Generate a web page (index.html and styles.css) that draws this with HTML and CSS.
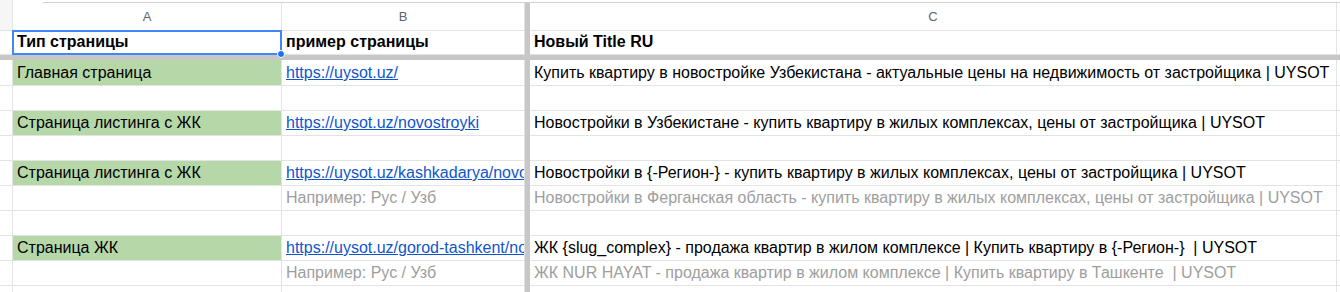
FILE: index.html
```html
<!DOCTYPE html>
<html lang="ru">
<head>
<meta charset="utf-8">
<title>Sheet</title>
<link rel="stylesheet" href="styles.css">
</head>
<body>
<div class="sheet">
  <div class="row top"><div class="corner-top"></div><div class="gap-top"></div><div class="topline"></div></div>
  <div class="row letters">
    <div class="cell rh corner"></div>
    <div class="cell">A</div>
    <div class="cell">B</div>
    <div class="bar"></div>
    <div class="cell">C</div>
    <div class="cell rest"></div>
  </div>
  <div class="row head">
    <div class="cell rh"></div>
    <div class="cell a selected">Тип страницы<span class="handle"></span></div>
    <div class="cell">пример страницы</div>
    <div class="bar"></div>
    <div class="cell">Новый Title RU</div>
    <div class="cell rest"></div>
  </div>
  <div class="hbar"></div>
  <div class="row first">
    <div class="cell rh"></div>
    <div class="cell a green">Главная страница</div>
    <div class="cell"><a class="link">https://uysot.uz/</a></div>
    <div class="bar"></div>
    <div class="cell">Купить квартиру в новостройке Узбекистана - актуальные цены на недвижимость от застройщика | UYSOT</div>
    <div class="cell rest"></div>
  </div>
  <div class="row">
    <div class="cell rh"></div>
    <div class="cell a"></div>
    <div class="cell"></div>
    <div class="bar"></div>
    <div class="cell"></div>
    <div class="cell rest"></div>
  </div>
  <div class="row">
    <div class="cell rh"></div>
    <div class="cell a green">Страница листинга с ЖК</div>
    <div class="cell"><a class="link">https://uysot.uz/novostroyki</a></div>
    <div class="bar"></div>
    <div class="cell">Новостройки в Узбекистане - купить квартиру в жилых комплексах, цены от застройщика | UYSOT</div>
    <div class="cell rest"></div>
  </div>
  <div class="row">
    <div class="cell rh"></div>
    <div class="cell a"></div>
    <div class="cell"></div>
    <div class="bar"></div>
    <div class="cell"></div>
    <div class="cell rest"></div>
  </div>
  <div class="row">
    <div class="cell rh"></div>
    <div class="cell a green">Страница листинга с ЖК</div>
    <div class="cell"><a class="link">https://uysot.uz/kashkadarya/novo</a></div>
    <div class="bar"></div>
    <div class="cell">Новостройки в {-Регион-} - купить квартиру в жилых комплексах, цены от застройщика | UYSOT</div>
    <div class="cell rest"></div>
  </div>
  <div class="row">
    <div class="cell rh"></div>
    <div class="cell a"></div>
    <div class="cell muted">Например: Рус / Узб</div>
    <div class="bar"></div>
    <div class="cell muted">Новостройки в Ферганская область - купить квартиру в жилых комплексах, цены от застройщика | UYSOT</div>
    <div class="cell rest"></div>
  </div>
  <div class="row">
    <div class="cell rh"></div>
    <div class="cell a"></div>
    <div class="cell"></div>
    <div class="bar"></div>
    <div class="cell"></div>
    <div class="cell rest"></div>
  </div>
  <div class="row">
    <div class="cell rh"></div>
    <div class="cell a green">Страница ЖК</div>
    <div class="cell"><a class="link">https://uysot.uz/gorod-tashkent/no</a></div>
    <div class="bar"></div>
    <div class="cell">ЖК {slug_complex} - продажа квартир в жилом комплексе | Купить квартиру в {-Регион-}&nbsp; | UYSOT</div>
    <div class="cell rest"></div>
  </div>
  <div class="row">
    <div class="cell rh"></div>
    <div class="cell a"></div>
    <div class="cell muted">Например: Рус / Узб</div>
    <div class="bar"></div>
    <div class="cell muted">ЖК NUR HAYAT - продажа квартир в жилом комплексе | Купить квартиру в Ташкенте&nbsp; | UYSOT</div>
    <div class="cell rest"></div>
  </div>
  <div class="row">
    <div class="cell rh"></div>
    <div class="cell a"></div>
    <div class="cell"></div>
    <div class="bar"></div>
    <div class="cell"></div>
    <div class="cell rest"></div>
  </div>
</div>
</body>
</html>
```
FILE: styles.css
```css
html, body {
  margin: 0;
  padding: 0;
  background: #ffffff;
  overflow: hidden;
}
.sheet {
  width: 1340px;
  height: 292px;
  overflow: hidden;
  font-family: "Liberation Sans", Arial, sans-serif;
  font-size: 16px;
  color: #000;
}
.row {
  display: grid;
  grid-template-columns: 13px 269px 243px 5px 807px 1fr;
  height: 25px;
}
.row.top {
  grid-template-columns: 13px 30px 1fr;
  height: 3px;
}
.corner-top {
  box-sizing: border-box;
  background: #f6f6f6;
  border-right: 1px solid #e2e3e3;
}
.topline {
  border-bottom: 1px solid #d0d0d0;
}
.cell {
  box-sizing: border-box;
  border-right: 1px solid #e2e3e3;
  border-bottom: 1px solid #e2e3e3;
  padding: 0 4px 3px 4px;
  display: flex;
  align-items: flex-end;
  white-space: nowrap;
  overflow: hidden;
  line-height: 18px;
}
.cell.rest {
  border-right: none;
}
.cell.rh {
  padding: 0;
}
.letters {
  height: 28px;
}
.letters .cell {
  justify-content: center;
  align-items: center;
  padding: 0;
  color: #5f6368;
  font-size: 13px;
}
.letters .corner {
  background: #f6f6f6;
}
.head {
  height: 24px;
}
.head .cell {
  font-weight: bold;
  padding-bottom: 3px;
}
.row.first {
  height: 26px;
}
.bar {
  background: #c7c7c7;
}
.hbar {
  height: 5px;
  background: #c7c7c7;
}
.green {
  background: #b6d7a8;
}
.link {
  color: #1155cc;
  text-decoration: underline;
}
.muted {
  color: #9e9e9e;
}
.selected {
  position: relative;
  overflow: visible;
}
.selected::after {
  content: "";
  position: absolute;
  left: -1px;
  top: -1px;
  right: -1px;
  bottom: -1px;
  border: 2px solid #4285f4;
  pointer-events: none;
}
.handle {
  position: absolute;
  right: -4px;
  bottom: -4px;
  width: 6px;
  height: 6px;
  border-radius: 50%;
  background: #1a73e8;
  border: 1px solid #ffffff;
  z-index: 2;
}
```
